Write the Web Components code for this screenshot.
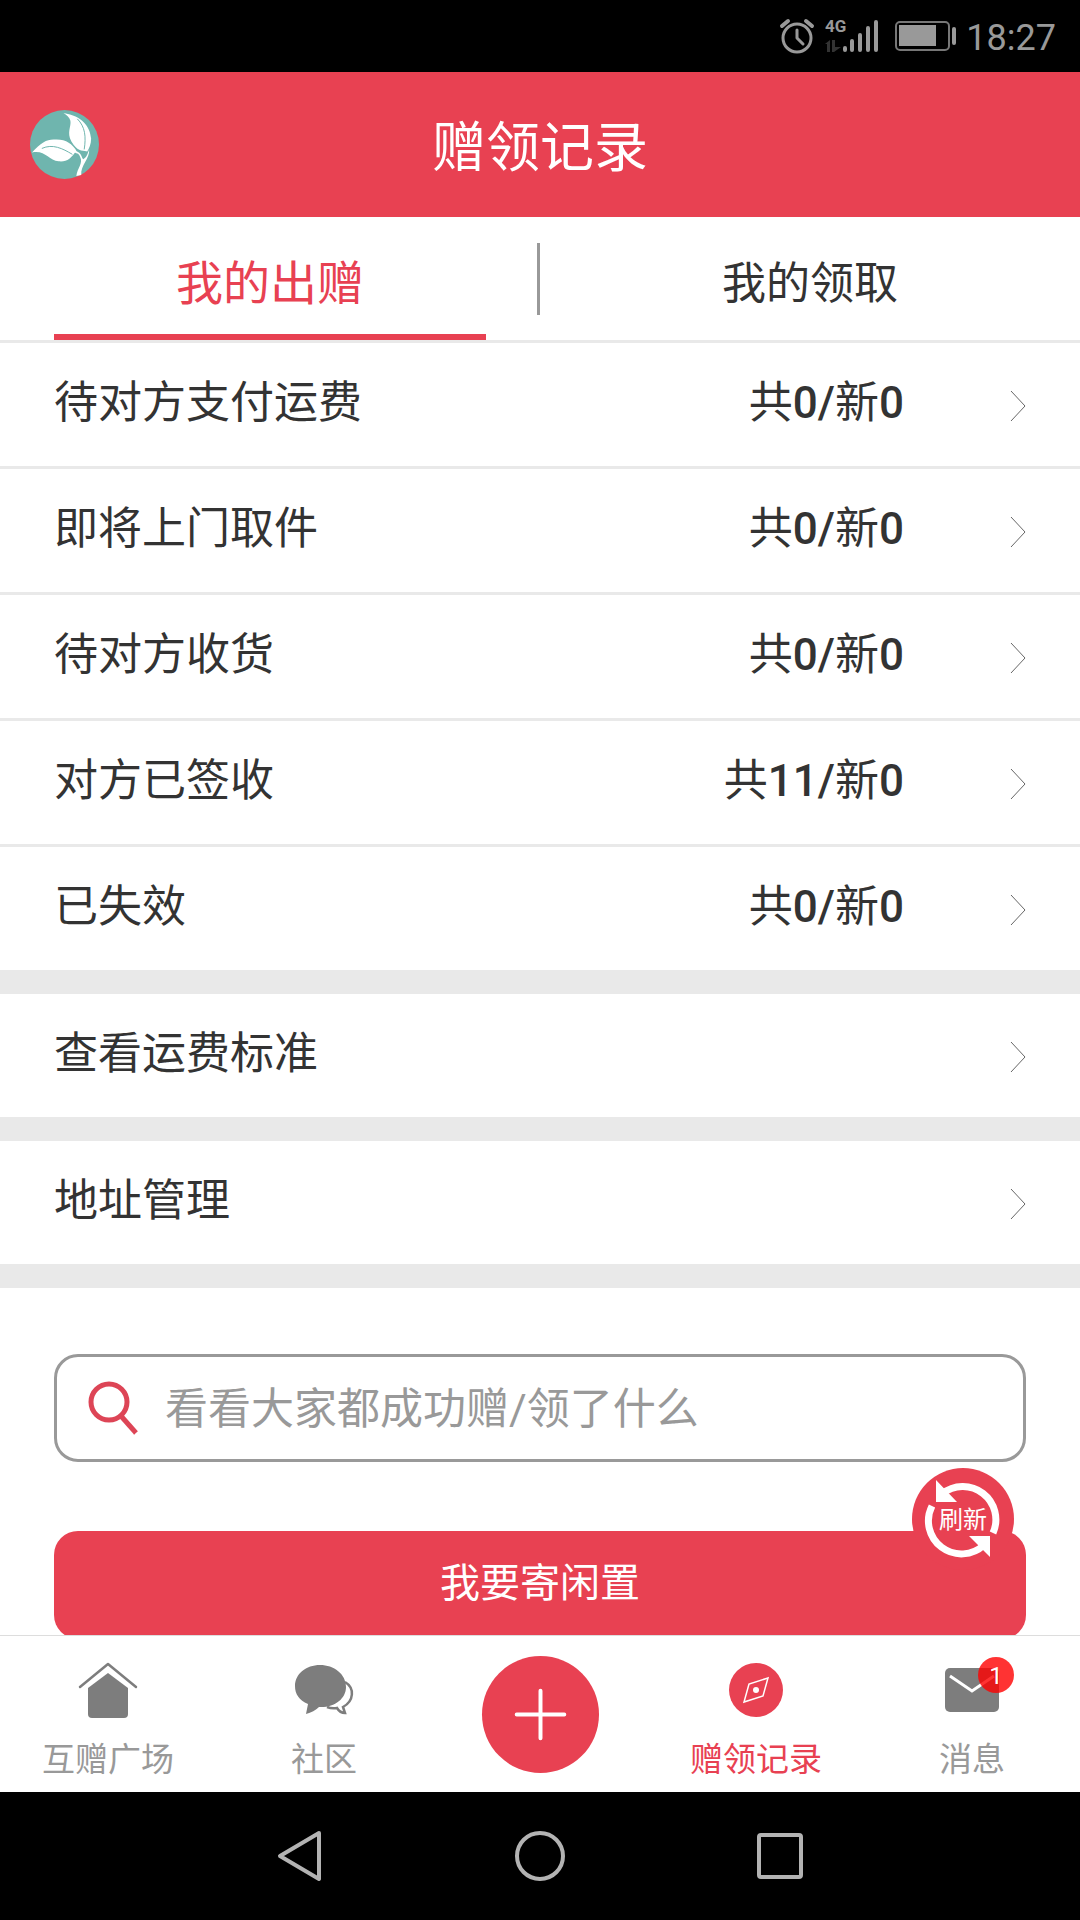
<!DOCTYPE html>
<html lang="zh-CN">
<head>
<meta charset="UTF-8">
<meta name="viewport" content="width=device-width, initial-scale=1">
<title>赠领记录</title>
<style>
    :root {
        --primary-color: #e84152;
        --text-color: #333;
        --muted-color: #999;
        --icon-color: #7d7d7d;
        --line-color: #e9e9e9;
        --side-space: 54px;
    }
    body {
        margin: 0;
        background: #fff;
        color: var(--text-color);
        font-family: Roboto, "Noto Sans CJK SC", sans-serif;
    }
</style>
</head>
<body>
<app-shell>
    <status-bar slot="top">18:27</status-bar>
    <page-header slot="top">赠领记录</page-header>

    <record-tabs>
        <span slot="given">我的出赠</span>
        <span slot="received">我的领取</span>
    </record-tabs>
    <list-group>
        <list-row count="共0/新0">待对方支付运费</list-row>
        <list-row count="共0/新0">即将上门取件</list-row>
        <list-row count="共0/新0">待对方收货</list-row>
        <list-row count="共11/新0">对方已签收</list-row>
        <list-row count="共0/新0">已失效</list-row>
    </list-group>
    <list-group>
        <list-row>查看运费标准</list-row>
    </list-group>
    <list-group>
        <list-row>地址管理</list-row>
    </list-group>
    <search-box placeholder="看看大家都成功赠/领了什么"></search-box>
    <primary-button>我要寄闲置</primary-button>

    <refresh-button slot="float">刷新</refresh-button>
    <tab-bar slot="bottom">
        <tab-item icon="home">互赠广场</tab-item>
        <tab-item icon="chat">社区</tab-item>
        <add-button></add-button>
        <tab-item icon="compass" active>赠领记录</tab-item>
        <tab-item icon="mail" badge="1">消息</tab-item>
    </tab-bar>
    <system-nav slot="bottom"></system-nav>
</app-shell>

<script>
// base class: every element only has to give its markup
class BaseElement extends HTMLElement {
    constructor() {
        super();
        this.attachShadow({ mode: 'open' });
    }

    connectedCallback() {
        this.shadowRoot.innerHTML = this.template();
    }
}

class AppShell extends BaseElement {
    template() {
        return `
            <style>
                :host {
                    display: flex;
                    flex-direction: column;
                    height: 100vh;
                }
                .body {
                    position: relative;
                    flex: 1;
                    min-height: 0;
                    display: flex;
                }
                main {
                    flex: 1;
                    overflow-y: auto;
                    scrollbar-width: none;
                }
                .float {
                    position: absolute;
                    right: 66px;
                    bottom: 65px;
                }
            </style>
            <slot name="top"></slot>
            <div class="body">
                <main><slot></slot></main>
                <div class="float"><slot name="float"></slot></div>
            </div>
            <slot name="bottom"></slot>
        `;
    }
}

class StatusBar extends BaseElement {
    template() {
        return `
            <style>
                :host {
                    display: flex;
                    flex: none;
                    align-items: center;
                    justify-content: flex-end;
                    height: 72px;
                    padding-right: 24px;
                    background: #000;
                    color: #999;
                    font-size: 36px;
                    line-height: 40px;
                }
                svg { display: block; }
                .alarm { margin-right: 10px; }
                .signal { margin-right: 16px; }
                .battery { margin-right: 8px; }
                .time { padding-top: 4px; }
                text { font: 700 17px Roboto, sans-serif; }
            </style>
            <svg class="alarm" width="36" height="36" viewBox="0 0 36 36" fill="none" stroke="#999">
                <circle cx="18" cy="20" r="14" stroke-width="3"/>
                <path d="M18 12v8l6 6" stroke-width="3" stroke-linecap="round" stroke-linejoin="round"/>
                <path d="M3 8l6-5M33 8l-6-5" stroke-width="4" stroke-linecap="round"/>
            </svg>
            <svg class="signal" width="54" height="44" viewBox="0 -4 54 44">
                <text x="0" y="14" fill="#999">4G</text>
                <path d="M0 26l5-4v12h-3v-8zM7 22h3v7h6l-7 5h-2z" fill="#333"/>
                <g stroke="#999" stroke-width="4" stroke-linecap="round">
                    <path d="M20 30v2M27 23v9M35 17v15M43 10v22M51 4v28"/>
                </g>
            </svg>
            <svg class="battery" width="63" height="30" viewBox="0 0 63 30">
                <rect x="1" y="1" width="53" height="28" rx="4" fill="none" stroke="#777" stroke-width="2"/>
                <rect x="4" y="4" width="37" height="21" fill="#999"/>
                <rect x="57" y="6" width="4" height="18" rx="2" fill="#999"/>
            </svg>
            <span class="time"><slot></slot></span>
        `;
    }
}

class PageHeader extends BaseElement {
    template() {
        return `
            <style>
                :host {
                    display: grid;
                    flex: none;
                    grid-template-columns: 1fr auto 1fr;
                    align-items: center;
                    height: 145px;
                    padding: 0 30px;
                    background: var(--primary-color);
                    color: #fff;
                }
                h1 {
                    margin: 0;
                    padding-top: 8px;
                    font-size: 54px;
                    font-weight: 400;
                    line-height: 64px;
                }
                a, svg { display: block; width: 69px; height: 69px; }
            </style>
            <a href="#home" aria-label="首页">
                <svg viewBox="0 0 70 70">
                    <circle cx="35" cy="35" r="35" fill="#6fb5ae"/>
                    <path d="M2 43C12 32 18 29 27 30C37 30 43 35 47 41C42 49 37 53 29 52C19 51 15 40 2 43Z" fill="#fff"/>
                    <path d="M34 3C53 6 61 17 62 29C62 35 60 39 58 42C52 41 48 42 42 32C37 23 42 17 41 11C40 7 37 5 34 3Z" fill="#fff"/>
                    <path d="M46 41C53 44 52 48 54 50C57 48 58 46 60 40C61 49 51 56 52 66L47 67C48 59 54 54 51 48C50 44 48 44 45 43Z" fill="#fff"/>
                    <path d="M12 39C23 34 33 39 43 45M48 9C56 17 57 27 55 40" fill="none" stroke="#6fb5ae"/>
                </svg>
            </a>
            <h1><slot></slot></h1>
        `;
    }
}

class RecordTabs extends BaseElement {
    template() {
        return `
            <style>
                :host {
                    display: block;
                    padding: 0 var(--side-space);
                    border-bottom: 3px solid var(--line-color);
                }
                div { display: flex; align-items: center; height: 123px; }
                button {
                    flex: 1;
                    align-self: stretch;
                    padding: 10px 0 0;
                    border: 0;
                    background: none;
                    color: inherit;
                    font: inherit;
                    font-size: 44px;
                    line-height: 56px;
                }
                button[aria-selected="true"] {
                    padding-top: 16px;
                    border-bottom: 6px solid var(--primary-color);
                    color: var(--primary-color);
                    font-size: 47px;
                }
                i {
                    width: 3px;
                    height: 72px;
                    margin: 0 54px 0 51px;
                    background: #999;
                }
            </style>
            <div role="tablist">
                <button type="button" role="tab" aria-selected="true"><slot name="given"></slot></button>
                <i></i>
                <button type="button" role="tab" aria-selected="false"><slot name="received"></slot></button>
            </div>
        `;
    }
}

class ListGroup extends BaseElement {
    template() {
        return `
            <style>
                :host {
                    display: flex;
                    flex-direction: column;
                    gap: 3px;
                    border-bottom: 24px solid var(--line-color);
                    background: var(--line-color);
                }
            </style>
            <slot></slot>
        `;
    }
}

class ListRow extends BaseElement {
    template() {
        // only the numbers are heavier, not the words
        const count = (this.getAttribute('count') || '').replace(/[\d/]+/g, '<b>$&</b>');
        return `
            <style>
                :host { display: block; background: #fff; }
                a {
                    display: flex;
                    align-items: center;
                    height: 123px;
                    padding: 0 var(--side-space);
                    color: inherit;
                    font-size: 44px;
                    line-height: 56px;
                    text-decoration: none;
                }
                .label { flex: 1; padding-bottom: 4px; }
                .count { padding-bottom: 4px; margin-right: 106px; }
                b { font-weight: 500; }
            </style>
            <a href="#detail">
                <span class="label"><slot></slot></span>
                ${count ? `<span class="count">${count}</span>` : ''}
                <svg width="16" height="32" viewBox="0 0 16 32" fill="none" stroke="#666">
                    <path d="M1 2L15 17L1 32"/>
                </svg>
            </a>
        `;
    }
}

class SearchBox extends BaseElement {
    template() {
        return `
            <style>
                :host { display: block; padding: 66px var(--side-space) 69px; }
                label {
                    display: flex;
                    align-items: center;
                    gap: 26px;
                    box-sizing: border-box;
                    height: 108px;
                    padding: 0 30px;
                    border: 3px solid #999;
                    border-radius: 24px;
                }
                svg { flex: none; }
                input {
                    flex: 1;
                    min-width: 0;
                    height: 64px;
                    padding: 2px 0 0;
                    border: 0;
                    outline: 0;
                    background: none;
                    color: inherit;
                    font: inherit;
                    font-size: 43px;
                }
                input::placeholder { color: #999; opacity: 1; }
            </style>
            <label>
                <svg width="52" height="56" viewBox="0 0 52 56" fill="none" stroke="#dd4556">
                    <circle cx="22" cy="22" r="18" stroke-width="5"/>
                    <path d="M34 36L49 53" stroke-width="5"/>
                </svg>
                <input type="search" aria-label="搜索" placeholder="${this.getAttribute('placeholder')}">
            </label>
        `;
    }
}

class PrimaryButton extends BaseElement {
    template() {
        return `
            <style>
                :host { display: block; padding: 0 var(--side-space) 48px; }
                button {
                    display: block;
                    width: 100%;
                    height: 108px;
                    padding: 0 0 2px;
                    border: 0;
                    border-radius: 24px;
                    background: var(--primary-color);
                    color: #fff;
                    font: inherit;
                    font-size: 40px;
                    line-height: 56px;
                }
            </style>
            <button type="button"><slot></slot></button>
        `;
    }
}

class RefreshButton extends BaseElement {
    template() {
        return `
            <style>
                :host { display: block; }
                button {
                    display: grid;
                    place-items: center;
                    width: 102px;
                    height: 102px;
                    padding: 0;
                    border: 0;
                    border-radius: 50%;
                    background: var(--primary-color);
                    color: #fff;
                    font: inherit;
                    font-size: 24px;
                    line-height: 32px;
                }
                svg, span { grid-area: 1 / 1; }
                span { padding-top: 2px; }
            </style>
            <button type="button">
                <svg width="102" height="102" viewBox="0 0 102 102" fill="none" stroke="#fff" stroke-width="7">
                    <path d="M30 26A33 33 0 0 1 81 65M20 38A33 33 0 0 0 72 77"/>
                    <path d="M24 12V34H45ZM78 89V68H57Z" fill="#fff" stroke="none"/>
                </svg>
                <span><slot></slot></span>
            </button>
        `;
    }
}

class TabBar extends BaseElement {
    template() {
        return `
            <style>
                :host { display: block; flex: none; border-top: 1px solid #ddd; background: #fff; }
                nav {
                    display: grid;
                    grid-template-columns: repeat(5, 1fr);
                    height: 156px;
                }
            </style>
            <nav><slot></slot></nav>
        `;
    }
}

const ICONS = {
    home: `
        <path d="M2 27L30 4L58 27" fill="none" stroke="var(--icon-color)" stroke-width="2.5" stroke-linecap="round" stroke-linejoin="round"/>
        <path d="M30 13L50 28V54Q50 58 46 58H14Q10 58 10 54V28Z" fill="var(--icon-color)"/>`,
    chat: `
        <path d="M51 22C61 28 60 41 49 47L51 53Q46 53 43 48Q38 49 33 47" fill="#fff" stroke="var(--icon-color)" stroke-width="2.5"/>
        <path d="M26 5C40 5 52 14 52 27C52 39 40 48 25 47Q20 52 12 54L14 44C5 40 1 34 1 26C1 14 12 5 26 5Z" fill="var(--icon-color)"/>`,
    compass: `
        <circle cx="30" cy="30" r="27" fill="var(--primary-color)"/>
        <path d="M42 18L23 24L18 42L37 36Z" fill="none" stroke="#fff" stroke-width="1.5"/>
        <circle cx="30" cy="30" r="3" fill="#fff"/>`,
    mail: `
        <rect x="3" y="8" width="54" height="44" rx="5" fill="var(--icon-color)"/>
        <path d="M8 16L30 31L52 16" fill="none" stroke="#fff" stroke-width="3"/>`
};

class TabItem extends BaseElement {
    template() {
        const badge = this.getAttribute('badge');
        return `
            <style>
                :host { display: block; color: var(--muted-color); }
                :host([active]) { color: var(--primary-color); }
                a {
                    display: flex;
                    flex-direction: column;
                    align-items: center;
                    gap: 20px;
                    padding-top: 24px;
                    color: inherit;
                    font-size: 33px;
                    line-height: 40px;
                    text-decoration: none;
                }
                .icon { position: relative; width: 60px; height: 60px; }
                .badge {
                    position: absolute;
                    top: -3px;
                    left: 36px;
                    width: 36px;
                    height: 36px;
                    border-radius: 50%;
                    background: rgba(255, 0, 0, .8);
                    color: #fff;
                    font-size: 24px;
                    line-height: 38px;
                    text-align: center;
                }
            </style>
            <a href="#${this.getAttribute('icon')}">
                <span class="icon">
                    <svg width="60" height="60" viewBox="0 0 60 60">${ICONS[this.getAttribute('icon')]}</svg>
                    ${badge ? `<span class="badge">${badge}</span>` : ''}
                </span>
                <span><slot></slot></span>
            </a>
        `;
    }
}

class AddButton extends BaseElement {
    template() {
        return `
            <style>
                :host { display: grid; place-items: center; }
                button {
                    width: 117px;
                    height: 117px;
                    padding: 0;
                    border: 0;
                    border-radius: 50%;
                    background: var(--primary-color);
                }
                svg { display: block; }
            </style>
            <button type="button" aria-label="发布">
                <svg width="117" height="117" viewBox="0 0 118 118" stroke="#fff" stroke-width="4" stroke-linecap="round">
                    <path d="M35 59H83M59 35V83"/>
                </svg>
            </button>
        `;
    }
}

class SystemNav extends BaseElement {
    template() {
        return `
            <style>
                :host {
                    display: flex;
                    flex: none;
                    justify-content: center;
                    gap: 180px;
                    height: 128px;
                    background: #000;
                }
                button { width: 60px; padding: 0; border: 0; background: none; }
                svg { display: block; fill: none; stroke: #b3b3b3; stroke-width: 4; stroke-linejoin: round; }
            </style>
            <button type="button" aria-label="返回">
                <svg width="60" height="60" viewBox="0 0 60 60"><path d="M49 7L10 30L49 53Z"/></svg>
            </button>
            <button type="button" aria-label="主屏幕">
                <svg width="60" height="60" viewBox="0 0 60 60"><circle cx="30" cy="30" r="23"/></svg>
            </button>
            <button type="button" aria-label="最近任务">
                <svg width="60" height="60" viewBox="0 0 60 60"><rect x="9" y="9" width="42" height="42" rx="2"/></svg>
            </button>
        `;
    }
}

customElements.define('app-shell', AppShell);
customElements.define('status-bar', StatusBar);
customElements.define('page-header', PageHeader);
customElements.define('record-tabs', RecordTabs);
customElements.define('list-group', ListGroup);
customElements.define('list-row', ListRow);
customElements.define('search-box', SearchBox);
customElements.define('primary-button', PrimaryButton);
customElements.define('refresh-button', RefreshButton);
customElements.define('tab-bar', TabBar);
customElements.define('tab-item', TabItem);
customElements.define('add-button', AddButton);
customElements.define('system-nav', SystemNav);
</script>
</body>
</html>
